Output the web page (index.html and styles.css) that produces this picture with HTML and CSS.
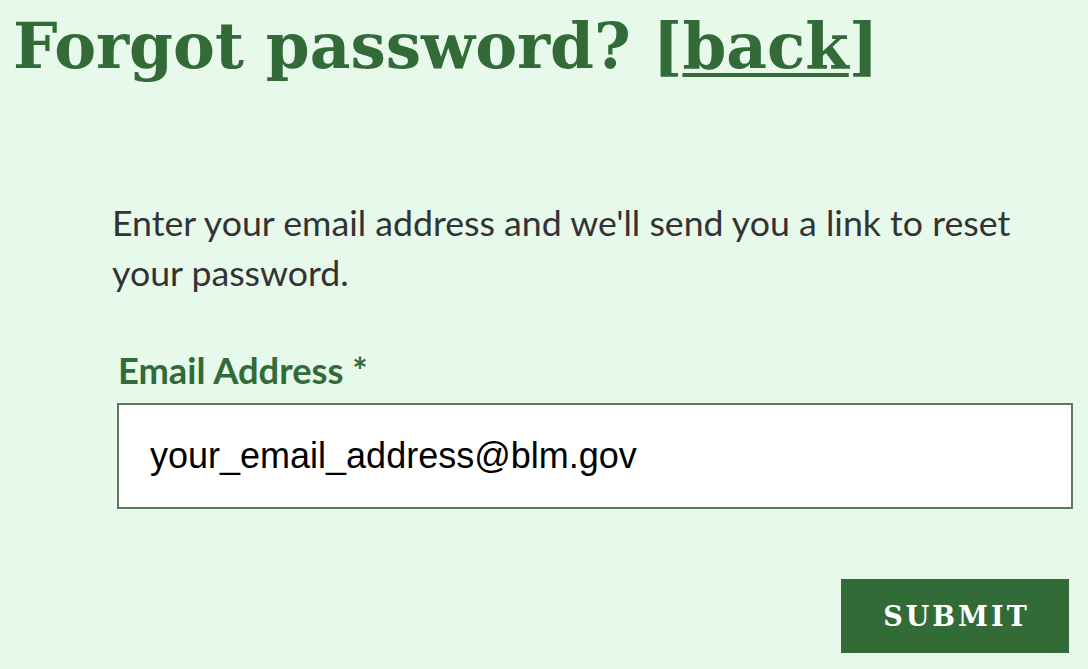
FILE: index.html
```html
<!DOCTYPE html>
<html lang="en">
<head>
<meta charset="utf-8">
<title>Forgot password?</title>
<link rel="stylesheet" href="styles.css">
</head>
<body>
<h1 class="title">Forgot password? [<a class="back" href="#">back</a>]</h1>
<main class="content">
  <p class="intro">Enter your email address and we'll send you a link to reset your password.</p>
  <form class="form">
    <label class="label" for="email">Email Address *</label>
    <input class="input" id="email" type="email" value="your_email_address@blm.gov">
    <div class="actions">
      <button class="submit" type="button">SUBMIT</button>
    </div>
  </form>
</main>
</body>
</html>
```
FILE: styles.css
```css
html, body {
  margin: 0;
  padding: 0;
  background: #e7f9ea;
}
body {
  width: 1088px;
  height: 669px;
  overflow: hidden;
}
.title {
  margin: 0;
  padding: 6px 0 0 13px;
  font-family: "DejaVu Serif", serif;
  font-weight: bold;
  font-size: 62.8px;
  line-height: 80px;
  color: #326b38;
  white-space: nowrap;
}
.back {
  color: #326b38;
  text-decoration: underline;
  text-decoration-thickness: 4px;
  text-underline-offset: 5px;
}
.content {
  padding: 112px 14px 0 112px;
}
.intro {
  margin: 0;
  font-family: Lato, sans-serif;
  font-size: 35.7px;
  line-height: 50px;
  color: #333333;
}
.form {
  margin: 0 0 0 5px;
  padding-top: 54px;
  display: flex;
  flex-direction: column;
}
.label {
  font-family: Lato, sans-serif;
  font-weight: bold;
  font-size: 36.3px;
  line-height: 36px;
  color: #326b38;
  padding-left: 1px;
  margin-bottom: 15px;
}
.input {
  box-sizing: border-box;
  width: 956px;
  height: 106px;
  margin: 0;
  border: 2px solid #5a7a5a;
  border-radius: 0;
  background: #ffffff;
  padding: 0 0 0 31px;
  font-family: "Liberation Sans", Arial, sans-serif;
  font-size: 36px;
  color: #000000;
  outline: none;
}
.actions {
  display: flex;
  justify-content: flex-end;
  padding-top: 70px;
  padding-right: 5px;
}
.submit {
  width: 228px;
  height: 74px;
  border: none;
  border-radius: 0;
  background: #326b38;
  color: #ffffff;
  font-family: "DejaVu Serif", serif;
  font-weight: bold;
  font-size: 27px;
  letter-spacing: 3px;
  padding: 0 0 0 3px;
  cursor: pointer;
}
```
